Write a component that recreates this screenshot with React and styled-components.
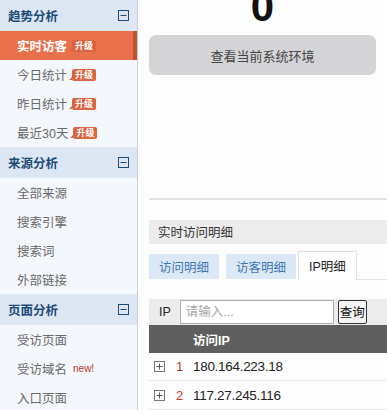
import React from "react";
import styled, { createGlobalStyle } from "styled-components";

const GlobalStyle = createGlobalStyle`
  html, body {
    margin: 0;
    padding: 0;
    background: #fdfdfd;
    overflow: hidden;
  }
  body {
    font-family: "Liberation Sans", "Noto Sans CJK SC", sans-serif;
  }
`;

const menu = [
  {
    title: "趋势分析",
    items: [
      { label: "实时访客", badge: true, active: true },
      { label: "今日统计", badge: true },
      { label: "昨日统计", badge: true },
      { label: "最近30天", badge: true },
    ],
  },
  {
    title: "来源分析",
    items: [
      { label: "全部来源" },
      { label: "搜索引擎" },
      { label: "搜索词" },
      { label: "外部链接" },
    ],
  },
  {
    title: "页面分析",
    items: [
      { label: "受访页面" },
      { label: "受访域名", isNew: true },
      { label: "入口页面" },
    ],
  },
];

const rows = ["180.164.223.18", "117.27.245.116"];

const MinusBox = () => (
  <svg width="11" height="11" viewBox="0 0 11 11">
    <rect x="0.5" y="0.5" width="10" height="10" fill="none" stroke="#1d4b78" />
    <line x1="2.5" y1="5.5" x2="8.5" y2="5.5" stroke="#1d4b78" />
  </svg>
);

const PlusBox = () => (
  <svg width="11" height="11" viewBox="0 0 11 11">
    <rect x="0.5" y="0.5" width="10" height="10" fill="none" stroke="#777" />
    <line x1="2.5" y1="5.5" x2="8.5" y2="5.5" stroke="#555" />
    <line x1="5.5" y1="2.5" x2="5.5" y2="8.5" stroke="#555" />
  </svg>
);

const App = () => {
  return (
    <Page>
      <GlobalStyle />
      <Sidebar>
        {menu.map((group) => (
          <div key={group.title}>
            <GroupHeader>
              <span>{group.title}</span>
              <MinusBox />
            </GroupHeader>
            {group.items.map((item) => (
              <MenuItem key={item.label} $active={item.active}>
                {item.label}
                {item.badge && <Badge>升级</Badge>}
                {item.isNew && <NewMark>new!</NewMark>}
              </MenuItem>
            ))}
          </div>
        ))}
      </Sidebar>

      <Main>
        <Top>
          <BigNumber>0</BigNumber>
          <EnvButton>查看当前系统环境</EnvButton>
        </Top>

        <Divider />

        <SectionTitle>实时访问明细</SectionTitle>

        <Tabs>
          <Tab>访问明细</Tab>
          <Tab>访客明细</Tab>
          <Tab $active>IP明细</Tab>
          <TabRest />
        </Tabs>

        <SearchRow>
          <span>IP</span>
          <SearchInput placeholder="请输入..." />
          <SearchButton>查询</SearchButton>
        </SearchRow>

        <TableHead>访问IP</TableHead>
        {rows.map((ip, i) => (
          <Row key={ip}>
            <PlusBox />
            <Index>{i + 1}</Index>
            <Ip>{ip}</Ip>
          </Row>
        ))}
      </Main>
    </Page>
  );
};

const Page = styled.div`
  display: flex;
  width: 387px;
  height: 410px;
  overflow: hidden;
`;

const Sidebar = styled.div`
  flex: 0 0 137px;
  background: #f4f7fb;
  border-right: 1px solid #c9cfd6;
`;

const GroupHeader = styled.div`
  display: flex;
  align-items: center;
  justify-content: space-between;
  height: 31px;
  padding: 0 8px 0 8px;
  background: #dde7f3;
  color: #1d4b78;
  font-size: 12.5px;
  font-weight: bold;
`;

const MenuItem = styled.div`
  display: flex;
  align-items: center;
  height: 29px;
  padding-left: 17px;
  font-size: 12.5px;
  color: ${(p) => (p.$active ? "#fff" : "#6a6a6a")};
  font-weight: ${(p) => (p.$active ? "bold" : "normal")};
  background: ${(p) => (p.$active ? "#e8704a" : "transparent")};
  box-shadow: ${(p) => (p.$active ? "inset -4px 0 0 #c24f31" : "none")};
`;

const Badge = styled.span`
  position: relative;
  margin-left: 5px;
  padding: 0 3px;
  height: 12px;
  line-height: 12px;
  font-size: 9px;
  font-weight: bold;
  color: #fff;
  background: #d9653f;
  border-radius: 2px;

  &::before {
    content: "";
    position: absolute;
    left: -3px;
    bottom: 1px;
    border-top: 3px solid transparent;
    border-right: 3px solid #d9653f;
  }
`;

const NewMark = styled.span`
  margin-left: 6px;
  font-size: 10px;
  color: #c0392b;
`;

const Main = styled.div`
  flex: 1;
  display: flex;
  flex-direction: column;
  padding-left: 11px;
  background: #fdfdfd;
`;

const Top = styled.div`
  display: flex;
  flex-direction: column;
  align-items: center;
  margin-right: 11px;
`;

const BigNumber = styled.div`
  font-size: 42px;
  font-weight: bold;
  line-height: 42px;
  margin-top: -14px;
  color: #111;
`;

const EnvButton = styled.div`
  align-self: stretch;
  margin-top: 7px;
  height: 40px;
  display: flex;
  align-items: center;
  justify-content: center;
  background: #d4d4d6;
  border-radius: 7px;
  color: #444;
  font-size: 13px;
`;

const Divider = styled.div`
  margin-top: 123px;
  height: 2px;
  background: #e2e2e2;
`;

const SectionTitle = styled.div`
  margin-top: 20px;
  height: 24px;
  display: flex;
  align-items: center;
  padding-left: 9px;
  background: #ececec;
  color: #333;
  font-size: 12.5px;
`;

const Tabs = styled.div`
  display: flex;
  align-items: flex-end;
  margin-top: 9px;
  height: 27px;
`;

const Tab = styled.div`
  display: flex;
  align-items: center;
  justify-content: center;
  height: ${(p) => (p.$active ? "28px" : "25px")};
  padding: 0 10px;
  margin-right: ${(p) => (p.$active ? "0" : "7px")};
  margin-left: ${(p) => (p.$active ? "-5px" : "0")};
  font-size: 12.5px;
  color: ${(p) => (p.$active ? "#222" : "#3d77b3")};
  background: ${(p) => (p.$active ? "#fff" : "#dce8f5")};
  border: ${(p) => (p.$active ? "1px solid #e2e2e2" : "none")};
  border-bottom: none;
  align-self: ${(p) => (p.$active ? "flex-end" : "center")};
`;

const TabRest = styled.div`
  flex: 1;
  align-self: flex-end;
  border-bottom: 1px solid #e2e2e2;
`;

const SearchRow = styled.div`
  display: flex;
  align-items: center;
  margin-top: 19px;
  height: 27px;
  padding-left: 10px;
  background: #ececec;
  font-size: 12.5px;
  color: #222;

  span {
    margin-right: 9px;
  }
`;

const SearchInput = styled.input`
  width: 154px;
  height: 24px;
  box-sizing: border-box;
  border: 1px solid #b0b0b0;
  background: #fff;
  padding: 0 5px;
  font-family: inherit;
  font-size: 12.5px;
  outline: none;

  &::placeholder {
    color: #a8a8a8;
  }
`;

const SearchButton = styled.button`
  margin-left: 4px;
  height: 24px;
  padding: 0 1px;
  border: 1px solid #333;
  border-radius: 2px;
  background: #f4f4f4;
  font-family: inherit;
  font-size: 12.5px;
  color: #111;
`;

const TableHead = styled.div`
  height: 28px;
  display: flex;
  align-items: center;
  padding-left: 44px;
  background: #5e5e5e;
  color: #fff;
  font-size: 12.5px;
  font-weight: bold;
`;

const Row = styled.div`
  display: flex;
  align-items: center;
  height: 28px;
  padding-left: 5px;
  border-bottom: 1px solid #e6e6e6;
`;

const Index = styled.span`
  margin-left: 11px;
  width: 17px;
  color: #c0392b;
  font-size: 13px;
`;

const Ip = styled.span`
  font-size: 13.5px;
  color: #222;
  letter-spacing: -0.3px;
`;

export default App;
